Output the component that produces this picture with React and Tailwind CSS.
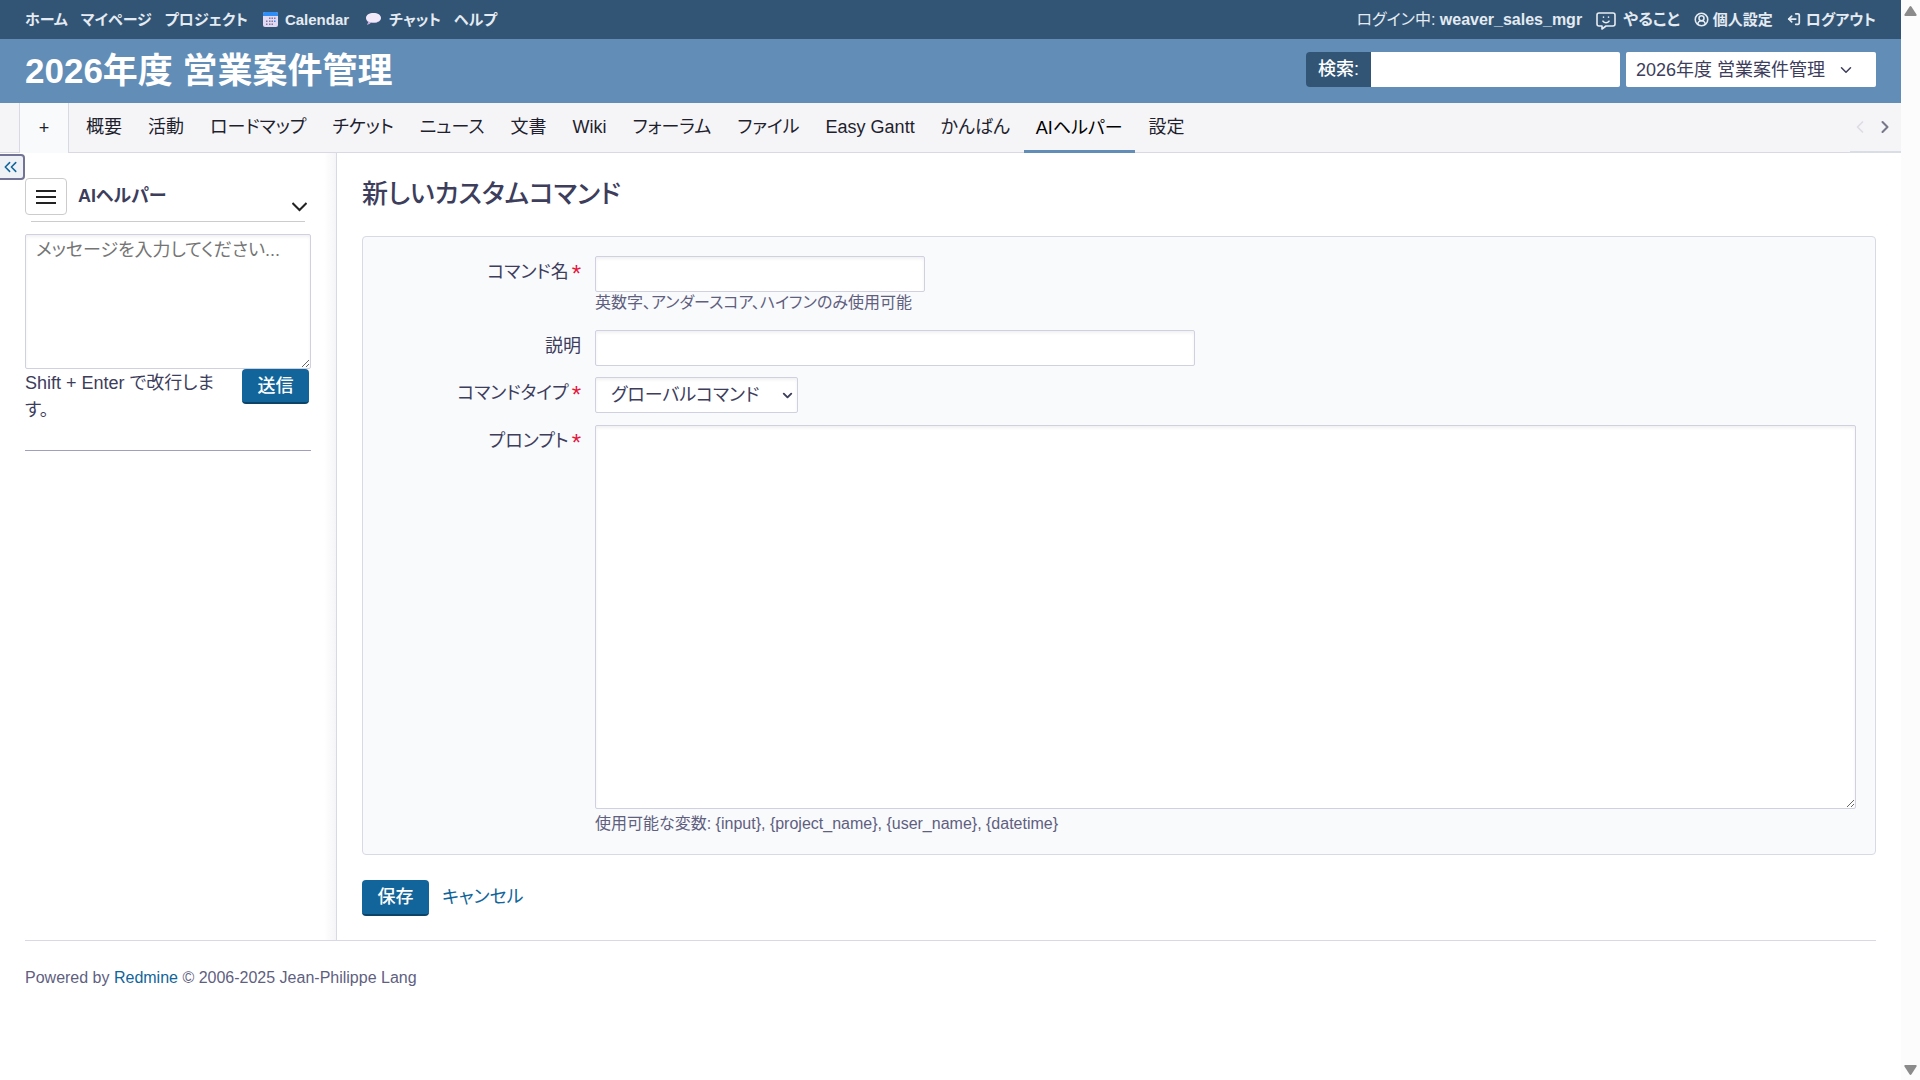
import { ChevronDown, ChevronLeft, ChevronRight, ChevronsLeft, LogOut, CircleUserRound } from 'lucide-react';

const tabs = [
  '概要',
  '活動',
  'ロードマップ',
  'チケット',
  'ニュース',
  '文書',
  'Wiki',
  'フォーラム',
  'ファイル',
  'Easy Gantt',
  'かんばん',
  'AIヘルパー',
  '設定',
];

const field =
  'rounded-xs border border-[#d1d0e0] bg-white shadow-[inset_0_2px_3px_rgba(60,60,90,0.07)] outline-none';

function CalendarIcon() {
  return (
    <svg className="h-[15px] w-[15px]" viewBox="0 0 15 15" aria-hidden="true">
      <rect width="15" height="15" rx="2" fill="#e4d9f3" />
      <path d="M0 4V2a2 2 0 0 1 2-2h11a2 2 0 0 1 2 2v2z" fill="#2f8df5" />
      <g fill="#7f789f">
        <path d="M6 5.500h1.500V7H6zM8.500 5.500H10V7H8.500zM11 5.500h1.500V7H11zM3 8.500h1.500V10H3zM6 8.500h1.500V10H6zM8.500 8.500H10V10H8.500zM3 11.500h1.500V13H3zM6 11.500h1.500V13H6zM8.500 11.500H10V13H8.500z" />
      </g>
      <path d="M11 8.500h1.500V10H11z" fill="#2f8df5" />
    </svg>
  );
}

function ChatIcon() {
  return (
    <svg className="h-3 w-[15px]" viewBox="0 0 15 12" aria-hidden="true">
      <path d="M7.500 0C11.700 0 15 2 15 4.900s-3.300 4.900-7.500 4.900c-.9 0-1.800-.1-2.600-.3-.8.9-2.200 1.900-3.700 2.200.6-.9 1-2.100.9-3C.8 7.700 0 6.400 0 4.900 0 2 3.300 0 7.500 0z" fill="#f1e8f9" />
      <path d="M1 7.200c1.300 1.500 3.700 2.200 6.500 2.200 3 0 5.500-.9 6.700-2.500-1 1.800-3.600 2.900-6.700 2.900-.9 0-1.800-.1-2.600-.3-.8.9-2.200 1.900-3.700 2.200.6-.9 1-2.100.9-3z" fill="#c3a8dc" />
    </svg>
  );
}

function SmileIcon() {
  return (
    <svg className="mt-0.5 h-[18px] w-5" viewBox="0 0 20 18" fill="none" stroke="#e6ecf2" strokeWidth="1.600" strokeLinejoin="round" strokeLinecap="round" aria-hidden="true">
      <path d="M3 1h14a2 2 0 0 1 2 2v9a2 2 0 0 1-2 2h-7l-4 3v-3H3a2 2 0 0 1-2-2V3a2 2 0 0 1 2-2z" />
      <path d="M7.500 5v.2M12.500 5v.2M7 9.200c1.600 2 4.400 2 6 0" />
    </svg>
  );
}

function TopMenu() {
  return (
    <div className="flex h-[39px] items-center justify-between bg-[#325575] px-[25px] text-[15px] font-bold text-[#e4ebf2]">
      <nav className="flex items-center gap-[13px]">
        <a href="#home">ホーム</a>
        <a href="#mypage">マイページ</a>
        <a href="#projects">プロジェクト</a>
        <a href="#calendar" className="ml-0.5 flex items-center gap-[7px]">
          <CalendarIcon />
          Calendar
        </a>
        <a href="#chat" className="ml-1 flex items-center gap-2">
          <ChatIcon />
          チャット
        </a>
        <a href="#help">ヘルプ</a>
      </nav>
      <div className="flex items-center gap-3.5">
        <span className="text-base font-normal">
          ログイン中: <a href="#user" className="font-bold">weaver_sales_mgr</a>
        </span>
        <a href="#todo" className="flex items-center gap-[7px] text-base">
          <SmileIcon />
          やること
        </a>
        <a href="#account" className="flex items-center gap-1">
          <CircleUserRound size={15} strokeWidth={2.5} aria-hidden="true" />
          個人設定
        </a>
        <a href="#logout" className="flex items-center gap-[5px]">
          <LogOut size={14} strokeWidth={3} className="rotate-180" aria-hidden="true" />
          ログアウト
        </a>
      </div>
    </div>
  );
}

function Header() {
  return (
    <header className="flex h-16 items-center justify-between bg-[#628db6] px-[25px]">
      <h1 className="text-[35px] font-bold text-white">2026年度 営業案件管理</h1>
      <div className="flex items-center gap-1.5 pb-[3px]">
        <form className="flex h-[35px]">
          <label htmlFor="q" className="flex w-[65px] items-center justify-center rounded-l-sm bg-[#325575] pb-0.5 font-medium text-white">
            検索:
          </label>
          <input id="q" type="text" className="w-[249px] rounded-r-xs bg-white px-2 outline-none" />
        </form>
        <button type="button" className="flex h-[35px] w-[250px] items-center gap-3 rounded-xs bg-white px-2.5 whitespace-nowrap">
          2026年度 営業案件管理
          <ChevronDown size={18} aria-hidden="true" />
        </button>
      </div>
    </header>
  );
}

function MainMenu() {
  return (
    <nav className="flex h-[50px] items-stretch border-b border-[#d9d9e6] bg-[#f5f5f8] pl-[19px] text-[#1f1f2e]">
      <a href="#new" className="-mb-px flex w-[50px] items-center justify-center border-x border-[#d9d9e6] bg-[#f9fafc]">
        +
      </a>
      <div className="ml-[5px] flex flex-1 gap-0.5">
        {tabs.map((tab) => (
          <a
            key={tab}
            href={`#${tab}`}
            className={
              tab === 'AIヘルパー'
                ? '-mb-px flex items-center border-b-3 border-[#628db6] px-3 pt-[2px] text-black'
                : 'flex items-center px-3 pb-px'
            }
          >
            {tab}
          </a>
        ))}
      </div>
      <div className="-mb-px flex w-[51px] items-center justify-between border-b-2 border-[#d9dde6] pr-1.5">
        <button type="button" aria-label="前へ" className="text-[#dcdce6]">
          <ChevronLeft size={20} />
        </button>
        <button type="button" aria-label="次へ" className="text-[#77778c]">
          <ChevronRight size={20} strokeWidth={2.5} />
        </button>
      </div>
    </nav>
  );
}

function Sidebar() {
  return (
    <aside className="relative w-[337px] shrink-0 border-r border-[#d9d9e6] bg-linear-to-l from-[#f5f5f8] to-white to-[12px] pt-6 pr-[25px] pl-[25px]">
      <button type="button" aria-label="サイドバーを閉じる" className="absolute top-px left-0 flex h-[26px] w-[25px] items-center justify-center rounded-r-sm border-2 border-l-0 border-[#737396] bg-[#eef1f6] pr-0.5 text-[#11659a]">
        <ChevronsLeft size={22} strokeWidth={1.75} />
      </button>
      <div className="flex items-center pt-px">
        <button type="button" aria-label="メニュー" className="flex h-[37px] w-[42px] items-center justify-center rounded-sm border border-[#cccccc] bg-white">
          <svg width="20" height="16" viewBox="0 0 20 16" stroke="#222" strokeWidth="2" aria-hidden="true">
            <path d="M0 2h20M0 8h20M0 14h20" />
          </svg>
        </button>
        <h3 className="ml-[11px] flex-1 pb-0.5 font-bold">AIヘルパー</h3>
        <button type="button" aria-label="履歴" className="mr-1 pt-5 text-[#222]">
          <svg width="15" height="10" viewBox="0 0 15 10" fill="none" stroke="currentColor" strokeWidth="2" aria-hidden="true">
            <path d="M0.500 1l7 7 7-7" />
          </svg>
        </button>
      </div>
      <div className="mx-1.5 mt-1.5 border-b border-[#cccccc]" />
      <textarea
        aria-label="メッセージ"
        placeholder="メッセージを入力してください..."
        className={`mt-3 block h-[135px] w-full resize-y px-2.5 py-0.5 leading-[27px] placeholder:text-[#757575] ${field}`}
      />
      <div className="flex items-start">
        <p className="w-[200px] pt-px leading-[27px]">Shift + Enter で改行します。</p>
        <button type="button" className="mr-0.5 ml-auto h-[35px] w-[67px] rounded-sm border-b-2 border-[#0b4468] bg-[#11659a] font-medium text-white">
          送信
        </button>
      </div>
      <hr className="mt-[26px] border-[#a0a0bd]" />
    </aside>
  );
}

function Row({ id, label, required, hint, children }) {
  return (
    <div className="flex items-start">
      <label htmlFor={id} className="flex w-[202px] shrink-0 justify-end pt-[3px] pr-3.5 leading-[27px]">
        {label}
        {required && <span className="ml-[3px] text-2xl leading-[30px] text-[#e5173f]">*</span>}
      </label>
      <div className="min-w-0 flex-1">
        {children}
        {hint && <em className="block text-base leading-[22px] text-[#5f5f7f] not-italic">{hint}</em>}
      </div>
    </div>
  );
}

function CommandForm() {
  return (
    <form>
      <div className="rounded-sm border border-[#d9d9e6] bg-[#f9fafc] py-[19px] pr-[19px] pl-[30px]">
        <Row id="name" label="コマンド名" required hint="英数字、アンダースコア、ハイフンのみ使用可能">
          <input id="name" type="text" className={`block h-9 w-[330px] px-2 ${field}`} />
        </Row>
        <div className="mt-4">
          <Row id="description" label="説明">
            <input id="description" type="text" className={`block h-9 w-[600px] px-2 ${field}`} />
          </Row>
        </div>
        <div className="mt-[11px]">
          <Row id="type" label="コマンドタイプ" required>
            <div className="relative w-[203px]">
              <select id="type" className={`block h-9 w-full appearance-none pr-8 pl-[15px] ${field}`}>
                <option>グローバルコマンド</option>
              </select>
              <ChevronDown size={15} strokeWidth={3} className="pointer-events-none absolute top-[11px] right-[3px]" aria-hidden="true" />
            </div>
          </Row>
        </div>
        <div className="mt-3">
          <Row
            id="prompt"
            label="プロンプト"
            required
            hint="使用可能な変数: {input}, {project_name}, {user_name}, {datetime}"
          >
            <textarea id="prompt" className={`mb-1 block h-[384px] w-full px-2 ${field}`} />
          </Row>
        </div>
      </div>
      <div className="mt-[25px] flex items-center gap-[13px]">
        <button type="submit" className="h-9 w-[67px] rounded-sm border-b-2 border-[#0b4468] bg-[#11659a] pb-px font-medium text-white">
          保存
        </button>
        <a href="#cancel" className="pb-0.5 text-[#11659a]">キャンセル</a>
      </div>
    </form>
  );
}

function ScrollBar() {
  return (
    <div className="sticky top-0 flex h-screen w-[19px] shrink-0 flex-col items-center justify-between bg-[#fcfcfc] pt-1.5 pb-[5px]" aria-hidden="true">
      <svg width="13" height="10" viewBox="0 0 13 10" fill="#8b8b8b">
        <path d="M5.500.8a1.200 1.200 0 0 1 2 0l5 7.700c.4.700 0 1.500-.8 1.500H1.300c-.8 0-1.200-.8-.8-1.500z" />
      </svg>
      <svg width="13" height="10" viewBox="0 0 13 10" fill="#8b8b8b">
        <path d="M5.500 9.200a1.200 1.200 0 0 0 2 0l5-7.700c.4-.7 0-1.500-.8-1.500H1.300C.5 0 .1.800.5 1.500z" />
      </svg>
    </div>
  );
}

export default function App() {
  return (
    <div className="flex min-h-screen bg-white font-['Liberation_Sans','Noto_Sans_CJK_JP',sans-serif] text-lg text-[#3d3d5c] [font-feature-settings:'palt']">
      <div className="min-w-0 flex-1">
        <TopMenu />
        <Header />
        <MainMenu />
        <div className="flex">
          <Sidebar />
          <main className="min-w-0 flex-1 pt-[21px] pr-[25px] pb-6 pl-[25px]">
            <h2 className="mb-[22px] text-[26px] leading-10 font-medium">新しいカスタムコマンド</h2>
            <CommandForm />
          </main>
        </div>
        <footer className="mx-[25px] border-t border-[#d9d9e6] pt-[26px] text-base leading-[22px] text-[#5f5f7f]">
          Powered by <a href="#redmine" className="text-[#11659a]">Redmine</a> © 2006-2025 Jean-Philippe Lang
        </footer>
      </div>
      <ScrollBar />
    </div>
  );
}
